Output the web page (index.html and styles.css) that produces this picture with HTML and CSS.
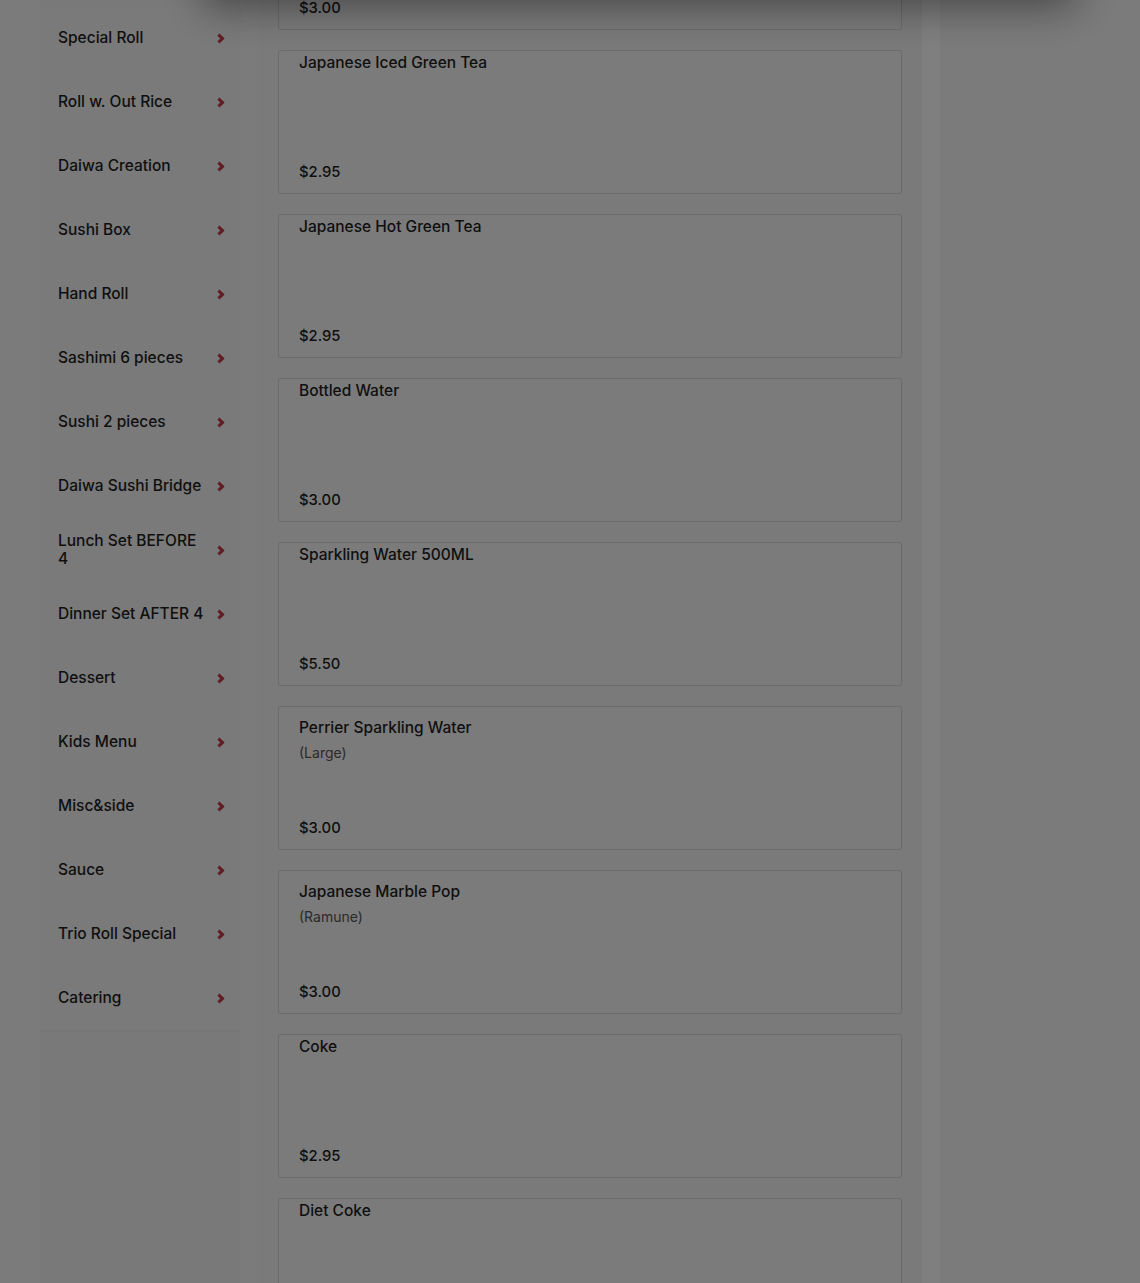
FILE: index.html
```html
<!DOCTYPE html>
<html lang="en">
<head>
  <meta charset="UTF-8" />
  <meta name="viewport" content="width=device-width, initial-scale=1.0"/>
  <title>Daiwa Sushi - Menu</title>
  <link rel="stylesheet" href="styles.css">
</head>
<body>
  <div class="layout">
    <!-- CATEGORIES -->
    <nav class="sidebar">
      <a class="cat" href="#"><span class="cat-name">Special Roll</span><span class="chev"></span></a>
      <a class="cat" href="#"><span class="cat-name">Roll w. Out Rice</span><span class="chev"></span></a>
      <a class="cat" href="#"><span class="cat-name">Daiwa Creation</span><span class="chev"></span></a>
      <a class="cat" href="#"><span class="cat-name">Sushi Box</span><span class="chev"></span></a>
      <a class="cat" href="#"><span class="cat-name">Hand Roll</span><span class="chev"></span></a>
      <a class="cat" href="#"><span class="cat-name">Sashimi 6 pieces</span><span class="chev"></span></a>
      <a class="cat" href="#"><span class="cat-name">Sushi 2 pieces</span><span class="chev"></span></a>
      <a class="cat" href="#"><span class="cat-name">Daiwa Sushi Bridge</span><span class="chev"></span></a>
      <a class="cat" href="#"><span class="cat-name">Lunch Set BEFORE 4</span><span class="chev"></span></a>
      <a class="cat" href="#"><span class="cat-name">Dinner Set AFTER 4</span><span class="chev"></span></a>
      <a class="cat" href="#"><span class="cat-name">Dessert</span><span class="chev"></span></a>
      <a class="cat" href="#"><span class="cat-name">Kids Menu</span><span class="chev"></span></a>
      <a class="cat" href="#"><span class="cat-name">Misc&amp;side</span><span class="chev"></span></a>
      <a class="cat" href="#"><span class="cat-name">Sauce</span><span class="chev"></span></a>
      <a class="cat" href="#"><span class="cat-name">Trio Roll Special</span><span class="chev"></span></a>
      <a class="cat" href="#"><span class="cat-name">Catering</span><span class="chev"></span></a>
    </nav>

    <!-- ITEMS -->
    <main class="main">
      <div class="items">
        <div class="item">
          <div class="item-name">Hot Tea</div>
          <div class="item-price">$3.00</div>
        </div>
        <div class="item">
          <div class="item-name">Japanese Iced Green Tea</div>
          <div class="item-price">$2.95</div>
        </div>
        <div class="item">
          <div class="item-name">Japanese Hot Green Tea</div>
          <div class="item-price">$2.95</div>
        </div>
        <div class="item">
          <div class="item-name">Bottled Water</div>
          <div class="item-price">$3.00</div>
        </div>
        <div class="item">
          <div class="item-name">Sparkling Water 500ML</div>
          <div class="item-price">$5.50</div>
        </div>
        <div class="item has-desc">
          <div class="item-name">Perrier Sparkling Water</div>
          <div class="item-desc">(Large)</div>
          <div class="item-price">$3.00</div>
        </div>
        <div class="item has-desc">
          <div class="item-name">Japanese Marble Pop</div>
          <div class="item-desc">(Ramune)</div>
          <div class="item-price">$3.00</div>
        </div>
        <div class="item">
          <div class="item-name">Coke</div>
          <div class="item-price">$2.95</div>
        </div>
        <div class="item">
          <div class="item-name">Diet Coke</div>
          <div class="item-price">$2.95</div>
        </div>
      </div>
    </main>
  </div>

  <!-- modal backdrop + dialog pushed above the viewport -->
  <div class="backdrop"></div>
  <div class="dialog"></div>
</body>
</html>
```

FILE: styles.css
```css
* {
  margin: 0;
  padding: 0;
  box-sizing: border-box;
}

body {
  font-family: Inter, 'Noto Sans', sans-serif;
  background: #f7f7f7;
  color: #222;
  overflow: hidden;
  height: 1283px;
}

/* page is scrolled: first item card sits partly above the fold */
.layout {
  display: flex;
  align-items: stretch;
  margin-top: -134px;
  margin-left: 40px;
  min-height: 1500px;
}

/* categories */
.sidebar {
  width: 200px;
  background: #f2f2f2;
  padding-top: 140px;
  display: flex;
  flex-direction: column;
}

.cat {
  display: flex;
  align-items: center;
  gap: 9px;
  height: 64px;
  padding: 0 14px 0 18px;
  font-size: 15.5px;
  font-weight: 500;
  line-height: 18px;
  color: #1e1e1e;
  text-decoration: none;
  background: #f4f4f4;
  box-shadow: 0 1px 3px rgba(0,0,0,0.04);
}

.cat-name {
  flex: 1;
}

.chev {
  flex: none;
  width: 7px;
  height: 7px;
  border-right: 3px solid #c23a48;
  border-top: 3px solid #c23a48;
  transform: rotate(45deg);
  margin-right: 3px;
}

/* items */
.main {
  width: 682px;
  margin-left: 18px;
  padding-right: 18px;
  background: linear-gradient(to right, #f5f5f5 664px, #fff 664px);
}

.items {
  padding: 20px;
  display: flex;
  flex-direction: column;
  gap: 20px;
}

.item {
  height: 144px;
  border: 1px solid #d6d6d6;
  border-radius: 3px;
  background: #f7f7f7;
  padding: 1px 20px 11px;
  display: flex;
  flex-direction: column;
}

.item.has-desc {
  padding-top: 10px;
}

.item-name {
  font-size: 15.5px;
  font-weight: 500;
  line-height: 22px;
  color: #1e1e1e;
}

.item-desc {
  font-size: 14px;
  color: #555;
  margin-top: 4px;
  line-height: 20px;
}

.item-price {
  margin-top: auto;
  font-size: 14.8px;
  font-weight: 500;
  line-height: 20px;
  color: #1e1e1e;
}

.backdrop {
  position: fixed;
  inset: 0;
  background: rgba(0, 0, 0, 0.5);
}

.dialog {
  position: fixed;
  left: 210px;
  top: -300px;
  width: 860px;
  height: 300px;
  background: #fff;
  box-shadow: 0 0 40px 6px rgba(0, 0, 0, 0.45);
}
```
